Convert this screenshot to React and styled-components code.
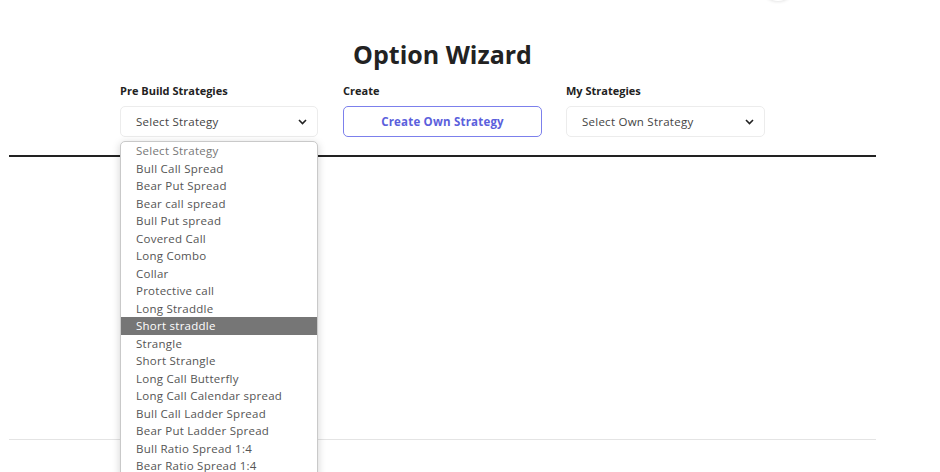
import React from "react";
import styled, { createGlobalStyle } from "styled-components";

const Global = createGlobalStyle`
  html, body { margin: 0; padding: 0; background: #fff; }
  body { font-family: "Open Sans", "Noto Sans", sans-serif; color: #222; }
  * { box-sizing: border-box; }
`;

const Page = styled.div`
  width: 940px;
  height: 472px;
  overflow: hidden;
  position: relative;
`;

const TopBar = styled.div`
  height: 0;
  display: flex;
  justify-content: flex-end;
  padding-right: 144px;
`;

const Avatar = styled.div`
  width: 36px;
  height: 36px;
  margin-top: -35px;
  border-radius: 50%;
  background: #fff;
  box-shadow: 0 1px 3px rgba(0, 0, 0, 0.1);
`;

const Main = styled.div`
  width: 867px;
  margin-left: 9px;
  padding-top: 36px;
`;

const Title = styled.h1`
  margin: 0;
  text-align: center;
  font-family: "Open Sans", sans-serif;
  font-weight: 700;
  font-size: 25px;
  line-height: 36px;
  color: #222;
`;

const Controls = styled.div`
  width: 645px;
  margin: 12px auto 0;
  display: grid;
  grid-template-columns: repeat(3, 199px);
  column-gap: 24px;
`;

const Field = styled.div`
  display: flex;
  flex-direction: column;
  position: relative;
`;

const Label = styled.div`
  font-size: 11px;
  font-weight: 700;
  line-height: 14px;
  color: #222;
  margin-bottom: 8px;
`;

const SelectBox = styled.div`
  height: 31px;
  width: ${(p) => p.$w || "199px"};
  border: 1px solid #ececec;
  border-radius: 5px;
  display: flex;
  align-items: center;
  justify-content: space-between;
  padding: 0 10px 0 15px;
  font-size: 11.5px;
  letter-spacing: 0.25px;
  color: #444;
  background: #fff;
`;

const Chevron = () => (
  <svg width="9" height="6" viewBox="0 0 9 6">
    <path d="M1 1 L4.5 4.5 L8 1" fill="none" stroke="#222" strokeWidth="1.6" />
  </svg>
);

const CreateButton = styled.button`
  height: 31px;
  width: 199px;
  border: 1px solid #7c80ec;
  border-radius: 5px;
  background: #fff;
  color: #5b60dc;
  font-family: "Open Sans", sans-serif;
  font-size: 11.5px;
  letter-spacing: 0.2px;
  font-weight: 700;
  cursor: pointer;
`;

const Divider = styled.div`
  height: 2px;
  background: #222;
  margin-top: 18px;
`;

const Empty = styled.div`
  height: 282px;
`;

const LightRule = styled.div`
  height: 1px;
  background: #e4e4e4;
`;

const Menu = styled.ul`
  position: absolute;
  top: 57px;
  left: 0;
  width: 198px;
  margin: 0;
  padding: 0 0 4px;
  list-style: none;
  background: #fff;
  border: 1px solid #c9c9c9;
  border-radius: 5px;
  box-shadow: 0 2px 8px rgba(0, 0, 0, 0.18);
  z-index: 5;
  overflow: hidden;
`;

const Item = styled.li`
  height: 17.5px;
  line-height: 17.5px;
  padding-left: 15px;
  font-size: 11.5px;
  letter-spacing: 0.25px;
  white-space: nowrap;
  color: ${(p) => (p.$active ? "#fff" : p.$muted ? "#777" : "#555")};
  background: ${(p) => (p.$active ? "#767676" : "transparent")};
`;

const options = [
  "Select Strategy",
  "Bull Call Spread",
  "Bear Put Spread",
  "Bear call spread",
  "Bull Put spread",
  "Covered Call",
  "Long Combo",
  "Collar",
  "Protective call",
  "Long Straddle",
  "Short straddle",
  "Strangle",
  "Short Strangle",
  "Long Call Butterfly",
  "Long Call Calendar spread",
  "Bull Call Ladder Spread",
  "Bear Put Ladder Spread",
  "Bull Ratio Spread 1:4",
  "Bear Ratio Spread 1:4",
];

export default function App() {
  return (
    <Page>
      <Global />
      <TopBar>
        <Avatar />
      </TopBar>
      <Main>
        <Title>Option Wizard</Title>
        <Controls>
          <Field>
            <Label>Pre Build Strategies</Label>
            <SelectBox $w="198px">
              <span>Select Strategy</span>
              <Chevron />
            </SelectBox>
            <Menu>
              {options.map((o, i) => (
                <Item key={o} $muted={i === 0} $active={o === "Short straddle"}>
                  {o}
                </Item>
              ))}
            </Menu>
          </Field>
          <Field>
            <Label>Create</Label>
            <CreateButton>Create Own Strategy</CreateButton>
          </Field>
          <Field>
            <Label>My Strategies</Label>
            <SelectBox>
              <span>Select Own Strategy</span>
              <Chevron />
            </SelectBox>
          </Field>
        </Controls>
        <Divider />
        <Empty />
        <LightRule />
      </Main>
    </Page>
  );
}
